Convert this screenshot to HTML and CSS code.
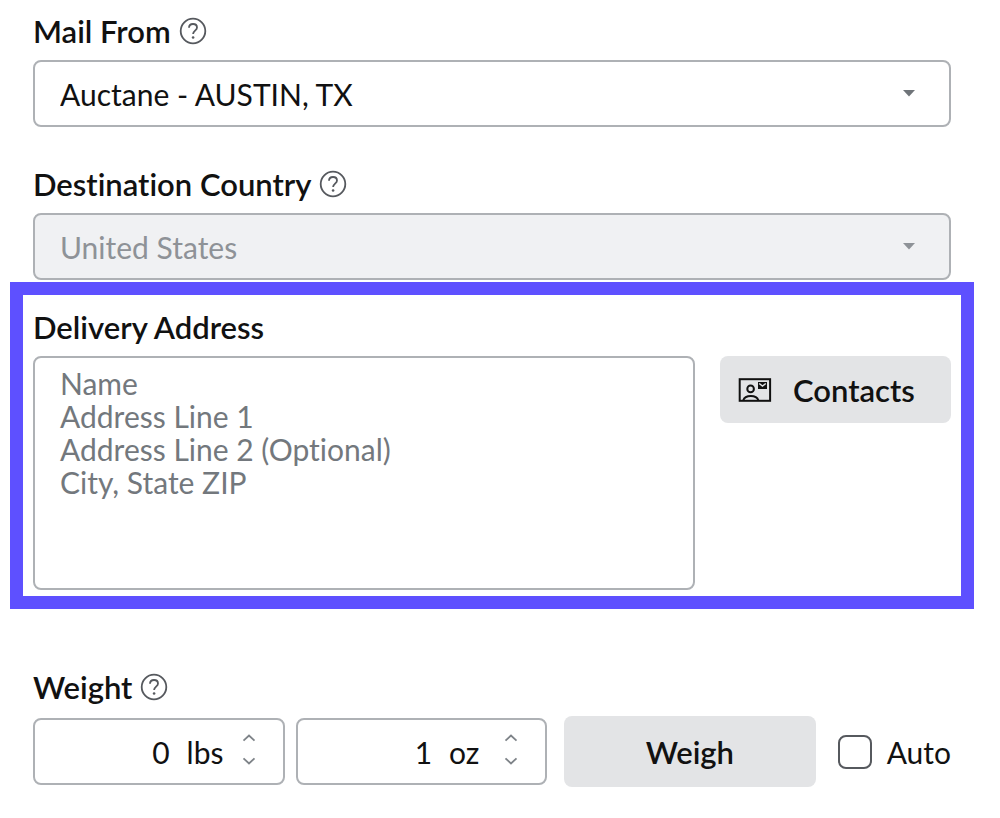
FILE: index.html
```html
<!DOCTYPE html>
<html lang="en">
<head>
    <meta charset="UTF-8">
    <meta name="viewport" content="width=device-width, initial-scale=1.0">
    <title>Print Postage</title>
    <link rel="stylesheet" href="styles.css">
</head>
<body>
    <form class="postage-form">
        <div class="field">
            <div class="label-row">
                <label for="mailFrom">Mail From</label>
                <button type="button" class="help-btn" aria-label="Help: Mail From">
                    <svg viewBox="0 0 28 28" width="28" height="28">
                        <circle cx="14" cy="14" r="12.3"/>
                        <path d="M10 10.8c0-2.300 1.600-3.800 4-3.800s4 1.400 4 3.500c0 3-3.900 3.400-3.900 6.500"/>
                        <circle class="dot" cx="14.1" cy="20.5" r="1.3"/>
                    </svg>
                </button>
            </div>
            <div class="select-wrap">
                <select id="mailFrom" name="mailFrom">
                    <option>Auctane - AUSTIN, TX</option>
                </select>
                <svg class="arrow" viewBox="0 0 12 7" width="12" height="7"><path d="M0 0h12L6 6.5z"/></svg>
            </div>
        </div>

        <div class="field">
            <div class="label-row">
                <label for="country">Destination Country</label>
                <button type="button" class="help-btn" aria-label="Help: Destination Country">
                    <svg viewBox="0 0 28 28" width="28" height="28">
                        <circle cx="14" cy="14" r="12.3"/>
                        <path d="M10 10.8c0-2.300 1.600-3.800 4-3.800s4 1.400 4 3.500c0 3-3.900 3.400-3.900 6.500"/>
                        <circle class="dot" cx="14.1" cy="20.5" r="1.3"/>
                    </svg>
                </button>
            </div>
            <div class="select-wrap">
                <select id="country" name="country" disabled>
                    <option>United States</option>
                </select>
                <svg class="arrow" viewBox="0 0 12 7" width="12" height="7"><path d="M0 0h12L6 6.5z"/></svg>
            </div>
        </div>

        <section class="highlight">
            <div class="label-row">
                <label for="address">Delivery Address</label>
            </div>
            <div class="address-row">
                <textarea id="address" name="address" placeholder="Name
Address Line 1
Address Line 2 (Optional)
City, State ZIP"></textarea>
                <button type="button" class="btn contacts-btn">
                    <svg viewBox="0 0 34 26" width="34" height="26">
                        <rect x="1.7" y="2.2" width="30.4" height="21.6"/>
                        <circle cx="12.6" cy="11.9" r="3.3"/>
                        <path d="M5.2 23.5c1-3 4-4.4 7.6-4.4s6.600 1.400 7.600 4.400"/>
                        <path class="solid" d="M20 5h9v7h-9z"/>
                        <path class="flap" d="M21.200 6.500l3.300 2.600 3.300-2.600"/>
                    </svg>
                    Contacts
                </button>
            </div>
        </section>

        <div class="field weight-field">
            <div class="label-row">
                <label for="pounds">Weight</label>
                <button type="button" class="help-btn" aria-label="Help: Weight">
                    <svg viewBox="0 0 28 28" width="28" height="28">
                        <circle cx="14" cy="14" r="12.3"/>
                        <path d="M10 10.8c0-2.300 1.600-3.800 4-3.800s4 1.400 4 3.500c0 3-3.900 3.400-3.900 6.500"/>
                        <circle class="dot" cx="14.1" cy="20.5" r="1.3"/>
                    </svg>
                </button>
            </div>
            <div class="weight-row">
                <div class="number-box">
                    <input type="number" id="pounds" name="pounds" value="0" min="0">
                    <label class="unit" for="pounds">lbs</label>
                    <div class="stepper">
                        <button type="button" data-step="1" aria-label="More pounds"><svg viewBox="0 0 14 8" width="14" height="8"><path d="M1.500 6.700L7 1.500l5.500 5.200"/></svg></button>
                        <button type="button" data-step="-1" aria-label="Fewer pounds"><svg viewBox="0 0 14 8" width="14" height="8"><path d="M1.500 1.300L7 6.500l5.500-5.200"/></svg></button>
                    </div>
                </div>
                <div class="number-box">
                    <input type="number" id="ounces" name="ounces" value="1" min="0">
                    <label class="unit" for="ounces">oz</label>
                    <div class="stepper">
                        <button type="button" data-step="1" aria-label="More ounces"><svg viewBox="0 0 14 8" width="14" height="8"><path d="M1.500 6.700L7 1.500l5.500 5.200"/></svg></button>
                        <button type="button" data-step="-1" aria-label="Fewer ounces"><svg viewBox="0 0 14 8" width="14" height="8"><path d="M1.500 1.300L7 6.500l5.500-5.200"/></svg></button>
                    </div>
                </div>
                <button type="button" class="btn weigh-btn">Weigh</button>
                <div class="auto-check">
                    <input type="checkbox" id="auto" name="auto">
                    <label for="auto">Auto</label>
                </div>
            </div>
        </div>
    </form>

    <script>
        document.querySelectorAll('.stepper button').forEach(button => {
            button.addEventListener('click', () => {
                const input = button.closest('.number-box').querySelector('input');
                input.value = Math.max(0, Number(input.value) + Number(button.dataset.step));
            });
        });
    </script>
</body>
</html>
```
FILE: styles.css
```css
:root {
    --text: #111;
    --muted: #73787d;
    --disabled: #8e9297;
    --border: #aeb1b5;
    --button-bg: #e3e4e6;
    --highlight: #5e50ff;
}

* {
    margin: 0;
    padding: 0;
    box-sizing: border-box;
    font-family: Lato, 'Open Sans', sans-serif;
    font-variant-ligatures: none;
}

body {
    background: white;
    color: var(--text);
    font-size: 30px;
    line-height: 36px;
}

.postage-form {
    padding: 13px 26px 30px 10px;
}

.field {
    padding: 0 23px;
}

.field + .field {
    margin-top: 39px;
}

.label-row {
    display: flex;
    align-items: center;
    gap: 8px;
    margin-bottom: 11px;
}

.label-row label {
    font-size: 31px;
    font-weight: 600;
}

.help-btn {
    display: flex;
    border: none;
    background: none;
    cursor: pointer;
}

.help-btn svg {
    fill: none;
    stroke: #56595e;
    stroke-width: 1.8;
}

.help-btn .dot {
    fill: #56595e;
    stroke: none;
}

.select-wrap {
    position: relative;
}

select {
    display: block;
    width: 100%;
    height: 67px;
    padding: 0 60px 0 25px;
    border: 2px solid var(--border);
    border-radius: 8px;
    background: white;
    color: var(--text);
    font-size: 30px;
    appearance: none;
}

select:disabled {
    background: #f0f1f3;
    color: var(--disabled);
    opacity: 1;
}

.arrow {
    position: absolute;
    right: 36px;
    top: 30px;
    fill: #6f7479;
    pointer-events: none;
}

select:disabled + .arrow {
    fill: var(--disabled);
}

.highlight {
    margin-top: 2px;
    padding: 14px 10px 6px;
    border: 13px solid var(--highlight);
}

.address-row {
    display: flex;
    align-items: flex-start;
    gap: 25px;
}

textarea {
    flex: 1;
    min-width: 0;
    height: 234px;
    padding: 9px 25px;
    border: 2px solid var(--border);
    border-radius: 8px;
    color: var(--text);
    font-size: 30px;
    line-height: 33px;
    resize: none;
}

textarea::placeholder {
    color: var(--muted);
}

.btn {
    border: none;
    border-radius: 8px;
    background: var(--button-bg);
    color: var(--text);
    font-size: 31px;
    font-weight: 600;
    cursor: pointer;
}

.contacts-btn {
    display: flex;
    align-items: center;
    gap: 21px;
    width: 231px;
    height: 67px;
    padding: 0 18px;
}

.contacts-btn svg {
    fill: none;
    stroke: var(--text);
    stroke-width: 2;
}

.contacts-btn .solid {
    fill: var(--text);
    stroke: none;
}

.contacts-btn .flap {
    stroke: var(--button-bg);
    stroke-width: 1.5;
}

.weight-field {
    margin-top: 60px;
}

.weight-row {
    display: flex;
    align-items: center;
    gap: 11px;
}

.number-box {
    flex: 1 1 250px;
    min-width: 0;
    display: flex;
    align-items: center;
    height: 67px;
    padding-right: 27px;
    border: 2px solid var(--border);
    border-radius: 8px;
}

.number-box input {
    flex: 1;
    min-width: 0;
    border: none;
    outline: none;
    background: none;
    color: var(--text);
    font-size: 30px;
    text-align: right;
    appearance: textfield;
}

.number-box input::-webkit-inner-spin-button {
    appearance: none;
}

.unit {
    width: 38px;
    margin: 0 17px;
}

.stepper {
    display: flex;
    flex-direction: column;
    gap: 15px;
    padding-bottom: 4px;
}

.stepper button {
    display: flex;
    border: none;
    background: none;
    cursor: pointer;
}

.stepper svg {
    fill: none;
    stroke: #7e8388;
    stroke-width: 1.8;
}

.weigh-btn {
    flex: 1 1 250px;
    height: 71px;
    margin-left: 6px;
}

.auto-check {
    display: flex;
    align-items: center;
    gap: 15px;
    margin-left: 11px;
}

.auto-check input {
    width: 34px;
    height: 34px;
    border: 2px solid #56595e;
    border-radius: 8px;
    background: white;
    appearance: none;
}

.auto-check input:checked {
    background: var(--highlight);
}
```
